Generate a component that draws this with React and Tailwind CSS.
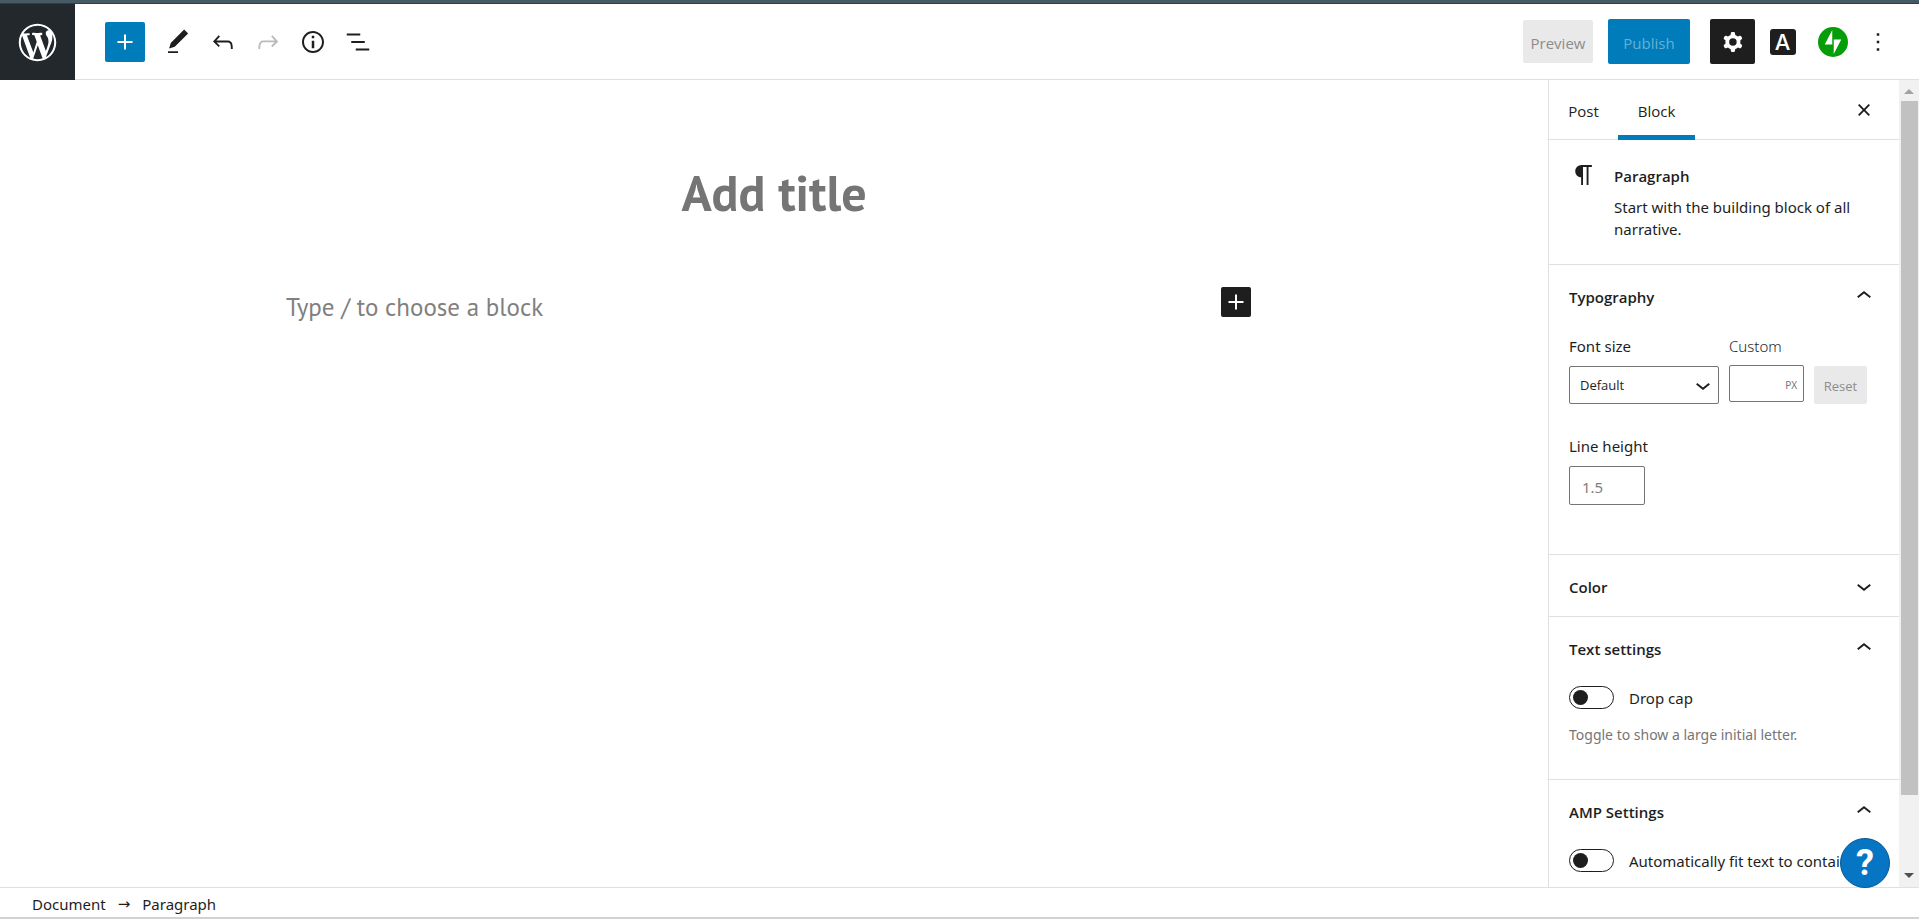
import React from 'react';

const PATHS = {
  plus: 'M18 11.2h-5.2V6h-1.6v5.2H6v1.6h5.2V18h1.6v-5.2H18z',
  edit: 'M20.1 5.1L16.9 2 6.2 12.7l-1.3 4.4 4.5-1.3L20.1 5.1zM4 20.8h8v-1.5H4v1.5z',
  undo: 'M18.3 11.7c-.6-.6-1.4-.9-2.3-.9H6.7l2.9-3.3-1.1-1-4.5 5L8.5 16l1-1-2.7-2.7H16c.5 0 .9.2 1.3.5 1 1 1 3.4 1 4.5v.3h1.5v-.2c0-1.5 0-4.3-1.5-5.7z',
  redo: 'M15.6 6.5l-1.1 1 2.9 3.3H8c-.9 0-1.7.3-2.3.9-1.4 1.5-1.4 4.2-1.4 5.6v.2h1.5v-.3c0-1.1 0-3.5 1-4.5.3-.3.7-.5 1.3-.5h9.2L14.5 15l1.1 1.1 4.6-4.6-4.6-5z',
  info: 'M12 3.2c-4.8 0-8.8 3.9-8.8 8.8 0 4.8 3.9 8.8 8.8 8.8 4.8 0 8.8-3.9 8.8-8.8 0-4.8-4-8.8-8.8-8.8zm0 16c-4 0-7.2-3.3-7.2-7.2C4.8 8 8 4.8 12 4.8s7.2 3.3 7.2 7.2c0 4-3.2 7.2-7.2 7.2zM11 17h2v-6h-2v6zm0-8h2V7h-2v2z',
  list: 'M13.8 5.2H3v1.5h10.8V5.2zm-3.6 12v1.5H21v-1.5H10.2zm7.2-6H6.6v1.5h10.8v-1.5z',
  cog: 'M10.289 4.836A1 1 0 0111.275 4h1.306a1 1 0 01.987.836l.244 1.466c.787.26 1.503.679 2.108 1.218l1.393-.522a1 1 0 011.216.437l.653 1.13a1 1 0 01-.23 1.273l-1.148.944a6.025 6.025 0 010 2.435l1.149.946a1 1 0 01.23 1.272l-.653 1.13a1 1 0 01-1.216.437l-1.394-.522c-.605.54-1.32.958-2.108 1.218l-.244 1.466a1 1 0 01-.987.836h-1.306a1 1 0 01-.986-.836l-.244-1.466a5.995 5.995 0 01-2.108-1.218l-1.394.522a1 1 0 01-1.217-.436l-.653-1.131a1 1 0 01.23-1.272l1.149-.946a6.026 6.026 0 010-2.435l-1.148-.944a1 1 0 01-.23-1.272l.653-1.131a1 1 0 011.217-.437l1.393.522a5.994 5.994 0 012.108-1.218l.244-1.466zM14.929 12a3 3 0 11-6 0 3 3 0 016 0z',
  close: 'M12 13.06l3.712 3.713 1.061-1.06L13.061 12l3.712-3.712-1.06-1.06L12 10.938 8.288 7.227l-1.061 1.06L10.939 12l-3.712 3.712 1.06 1.061L12 13.061z',
  more: 'M13 19h-2v-2h2v2zm0-6h-2v-2h2v2zm0-6h-2V5h2v2z',
  down: 'M17.5 11.6L12 16l-5.5-4.4.9-1.2L12 14l4.5-3.6 1 1.2z',
  up: 'M6.5 12.4L12 8l5.5 4.4-.9 1.2L12 10l-4.5 3.6-1-1.2z',
  paragraph: 'M18.3 4H9.9v-.1l-.9.2c-2.3.4-4 2.4-4 4.8s1.7 4.4 4 4.8l.7.1V20h1.5V5.5h2.9V20h1.5V5.5h2.7V4z',
};

function Icon({ name, className = '' }) {
  return (
    <svg viewBox="0 0 24 24" aria-hidden="true" className={`size-[30px] shrink-0 fill-current ${className}`}>
      <path fillRule="evenodd" clipRule="evenodd" d={PATHS[name]} />
    </svg>
  );
}

function ToolButton({ icon, label, disabled }) {
  return (
    <button
      type="button"
      aria-label={label}
      disabled={disabled}
      className="flex size-[45px] items-center justify-center text-[#1e1e1e] disabled:text-[#bbbbbb]"
    >
      <Icon name={icon} />
    </button>
  );
}

function Header() {
  return (
    <header className="flex h-[76px] shrink-0 border-b border-[#e0e0e0] bg-white">
      <a href="#dashboard" aria-label="View Posts" className="-mb-px flex w-[75px] items-center justify-center bg-[#23282d] text-white">
        <svg viewBox="-2 -2 24 24" aria-hidden="true" className="size-[45px] fill-current">
          <path d="M20 10c0-5.51-4.49-10-10-10C4.48 0 0 4.49 0 10c0 5.52 4.48 10 10 10 5.51 0 10-4.48 10-10zM7.78 15.37L4.37 6.22c.55-.02 1.17-.08 1.17-.08.5-.06.44-1.13-.06-1.11 0 0-1.45.11-2.37.11-.18 0-.37 0-.58-.01C4.12 2.69 6.87 1.11 10 1.11c2.33 0 4.45.87 6.05 2.34-.68-.11-1.65.39-1.65 1.58 0 .74.45 1.36.9 2.1.35.61.55 1.36.55 2.46 0 1.49-1.4 5-1.4 5l-3.03-8.37c.54-.02.82-.17.82-.17.5-.05.44-1.25-.06-1.22 0 0-1.44.12-2.38.12-.87 0-2.33-.12-2.33-.12-.5-.03-.56 1.2-.06 1.22l.92.08 1.26 3.41zM17.41 10c.24-.64.74-1.87.43-4.25.7 1.29 1.05 2.71 1.05 4.25 0 3.29-1.73 6.24-4.4 7.78.97-2.59 1.94-5.2 2.92-7.78zM6.1 18.09C3.12 16.65 1.11 13.53 1.11 10c0-1.3.23-2.48.72-3.59C3.25 10.3 4.67 14.2 6.1 18.09zm4.03-6.63l2.58 6.98c-.86.29-1.76.45-2.71.45-.79 0-1.57-.11-2.29-.33.81-2.38 1.62-4.74 2.42-7.1z" />
        </svg>
      </a>
      <div className="flex flex-1 items-center justify-between pr-[19px] pl-[30px]">
        <div className="flex items-center">
          <button type="button" aria-label="Add block" className="mr-2.5 flex size-10 items-center justify-center rounded-xs bg-[#007cba] text-white">
            <Icon name="plus" />
          </button>
          <ToolButton icon="edit" label="Tools" />
          <ToolButton icon="undo" label="Undo" />
          <ToolButton icon="redo" label="Redo" disabled />
          <ToolButton icon="info" label="Details" />
          <ToolButton icon="list" label="Outline" />
        </div>
        <div className="flex items-center">
          <button type="button" disabled className="mr-[15px] h-[43px] w-[70px] rounded-xs bg-[#e9e9e9] pt-[3px] text-[15px] text-[#8c8c8c]">
            Preview
          </button>
          <button type="button" className="mr-5 h-[45px] w-[82px] rounded-xs bg-[#007cba] pt-[3px] text-[15px] text-[#66b0d6]">
            Publish
          </button>
          <button type="button" aria-label="Settings" className="mr-[5px] flex size-[45px] items-center justify-center rounded-xs bg-[#1e1e1e] text-white">
            <Icon name="cog" />
          </button>
          <button type="button" aria-label="Advanced" className="mr-[5px] flex size-[45px] items-center justify-center">
            <span className="flex size-[26px] items-center justify-center rounded-[3px] bg-[#1e1e1e] font-[Inter] text-[22px] leading-none font-medium text-white">A</span>
          </button>
          <button type="button" aria-label="Jetpack" className="flex size-[45px] items-center justify-center">
            <svg viewBox="0 0 32 32" aria-hidden="true" className="size-[30px]">
              <circle cx="16" cy="16" r="16" fill="#069e08" />
              <path fill="#fff" d="M15.2 18.7H7.2L15.2 3.2zM16.8 28.8V13.3h8z" />
            </svg>
          </button>
          <ToolButton icon="more" label="Options" />
        </div>
      </div>
    </header>
  );
}

function Editor() {
  return (
    <main className="min-w-0 flex-1 bg-white font-['PT_Sans','Noto_Sans',sans-serif]">
      <input
        aria-label="Add title"
        placeholder="Add title"
        className="mt-[79px] block h-[66px] w-full text-center text-[50px] font-bold outline-none placeholder:text-[#757575]"
      />
      <div className="mx-auto mt-[62px] flex max-w-[976px] items-center pr-[11px]">
        <input
          aria-label="Paragraph block"
          placeholder="Type / to choose a block"
          className="h-10 min-w-0 flex-1 text-[25px] outline-none placeholder:text-[#808080]"
        />
        <button type="button" aria-label="Add block" className="-mt-2.5 flex size-[30px] items-center justify-center rounded-xs bg-[#1e1e1e] text-white">
          <Icon name="plus" />
        </button>
      </div>
    </main>
  );
}

function Panel({ title, open, last, children }) {
  return (
    <section className={last ? '' : 'border-b border-[#e0e0e0]'}>
      <h2 className="font-['Open_Sans','Noto_Sans',sans-serif]">
        <button type="button" aria-expanded={open} className="flex h-[61px] w-full items-center justify-between px-5 text-[15px] font-semibold">
          <span className="pt-0.5">{title}</span>
          <Icon name={open ? 'up' : 'down'} />
        </button>
      </h2>
      {children}
    </section>
  );
}

function Toggle({ id, label }) {
  return (
    <div className="flex items-center gap-[15px] whitespace-nowrap">
      <input
        id={id}
        type="checkbox"
        role="switch"
        className="relative h-[23px] w-[45px] shrink-0 appearance-none rounded-full border border-[#1e1e1e] bg-white before:absolute before:top-[3px] before:left-[3px] before:size-[15px] before:rounded-full before:bg-[#1e1e1e]"
      />
      <label htmlFor={id}>{label}</label>
    </div>
  );
}

function Sidebar() {
  return (
    <aside className="flex w-[371px] shrink-0 border-l border-[#e0e0e0] bg-white">
      <div className="min-w-0 flex-1 overflow-hidden font-['Noto_Sans',sans-serif] text-[15px] leading-[22px]">
        <div className="flex h-[60px] items-stretch border-b border-[#e0e0e0] font-['Open_Sans','Noto_Sans',sans-serif]">
          <button type="button" className="w-[69px] pt-0.5 font-medium">Post</button>
          <button type="button" className="-mb-px w-[77px] border-b-[5px] border-[#007cba] pt-1.5 font-medium">Block</button>
          <button type="button" aria-label="Close settings" className="mr-5 ml-auto">
            <Icon name="close" />
          </button>
        </div>
        <div className="flex gap-[15px] border-b border-[#e0e0e0] px-5 pt-5 pb-6">
          <Icon name="paragraph" />
          <div>
            <h2 className="font-['Open_Sans','Noto_Sans',sans-serif] leading-8 font-semibold">Paragraph</h2>
            <p className="mt-1">Start with the building block of all narrative.</p>
          </div>
        </div>
        <Panel title="Typography" open>
          <div className="px-5 pt-[9px] pb-[49px]">
            <div className="flex gap-2.5">
              <div className="w-[150px]">
                <label htmlFor="font-size" className="block">Font size</label>
                <div className="relative mt-[9px] font-['Open_Sans','Noto_Sans',sans-serif]">
                  <select id="font-size" className="h-[38px] w-full appearance-none rounded-xs border border-[#757575] pl-2.5 text-[13px]">
                    <option>Default</option>
                  </select>
                  <Icon name="down" className="pointer-events-none absolute top-1 right-px" />
                </div>
              </div>
              <div className="w-[75px]">
                <label htmlFor="custom-size" className="block font-light">Custom</label>
                <div className="relative mt-2">
                  <input id="custom-size" className="h-[37px] w-full rounded-xs border border-[#757575] px-2" />
                  <span className="pointer-events-none absolute top-[9px] right-[7px] text-[10px] text-[#757575]">PX</span>
                </div>
              </div>
              <button type="button" disabled className="mt-[31px] h-[38px] w-[53px] rounded-xs bg-[#e9e9e9] pt-0.5 font-['Open_Sans','Noto_Sans',sans-serif] text-[13px] text-[#8c8c8c]">
                Reset
              </button>
            </div>
            <div className="mt-[31px]">
              <label htmlFor="line-height" className="block">Line height</label>
              <input id="line-height" placeholder="1.5" className="mt-[9px] h-[39px] w-[76px] rounded-xs border border-[#757575] px-3 pt-0.5 placeholder:text-[#808080]" />
            </div>
          </div>
        </Panel>
        <Panel title="Color" />
        <Panel title="Text settings" open>
          <div className="px-5 pt-2 pb-[33px]">
            <Toggle id="drop-cap" label="Drop cap" />
            <p className="mt-[15px] text-[14px] text-[#757575]">Toggle to show a large initial letter.</p>
          </div>
        </Panel>
        <Panel title="AMP Settings" open last>
          <div className="px-5 pt-2">
            <Toggle id="fit-text" label="Automatically fit text to container" />
          </div>
        </Panel>
      </div>
      <div aria-hidden="true" className="flex w-5 flex-col items-center bg-[#f1f1f1]">
        <svg viewBox="0 0 10 5" className="mt-[9px] h-[5px] w-2.5 fill-[#a3a3a3]"><path d="M0 5L5 0l5 5z" /></svg>
        <div className="mt-[7px] h-[86%] w-[17px] bg-[#c1c1c1]" />
        <svg viewBox="0 0 10 5" className="mt-auto mb-[9px] h-[5px] w-2.5 fill-[#505050]"><path d="M0 0h10L5 5z" /></svg>
      </div>
    </aside>
  );
}

export default function App() {
  return (
    <div className="relative flex h-screen flex-col overflow-hidden bg-white font-['Open_Sans','Noto_Sans',sans-serif] text-[#1e1e1e]">
      <div className="h-1 shrink-0 border-b border-[#2f3f47] bg-[#455a64]" />
      <Header />
      <div className="flex min-h-0 flex-1">
        <Editor />
        <Sidebar />
      </div>
      <footer className="flex h-8 shrink-0 items-center border-t border-b-2 border-t-[#e0e0e0] border-b-[#d2d2d2] pl-8 font-['Noto_Sans',sans-serif] text-[15px]">
        <nav aria-label="Block breadcrumb" className="flex items-center gap-3 pt-1">
          <a href="#document">Document</a>
          <span className="font-['DejaVu_Sans']">→</span>
          <a href="#paragraph">Paragraph</a>
        </nav>
      </footer>
      <button type="button" aria-label="Help" className="absolute right-[29px] bottom-[31px] flex size-[50px] items-center justify-center rounded-full border border-[#0a5a94] bg-[#0675c4] font-[Roboto] text-[36px] leading-none font-bold text-white">
        ?
      </button>
    </div>
  );
}
